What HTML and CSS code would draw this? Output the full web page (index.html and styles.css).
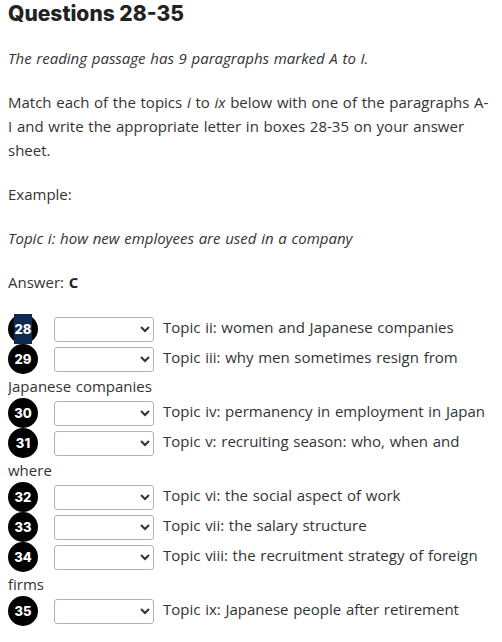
FILE: index.html
```html
<!DOCTYPE html>
<html lang="en">
<head>
<meta charset="utf-8">
<title>Questions 28-35</title>
<link rel="stylesheet" href="styles.css">
</head>
<body>
<h2 class="title">Questions 28-35</h2>
<p class="para"><em>The reading passage has 9 paragraphs marked A to I.</em></p>
<p class="para">Match each of the topics <em>i</em> to <em>ix</em> below with one of the paragraphs A-I and write the appropriate letter in boxes 28-35 on your answer sheet.</p>
<p class="para">Example:</p>
<p class="para"><em>Topic i: how new employees are used in a company</em></p>
<p class="para">Answer: <strong>C</strong></p>
<div class="questions">
<div class="q"><span class="badge"><span class="picked">28</span></span><select class="answer"><option></option><option>A</option><option>B</option><option>C</option><option>D</option><option>E</option><option>F</option><option>G</option><option>H</option><option>I</option></select><span class="topic">Topic ii: women and Japanese companies</span></div>
<div class="q"><span class="badge">29</span><select class="answer"><option></option><option>A</option><option>B</option><option>C</option><option>D</option><option>E</option><option>F</option><option>G</option><option>H</option><option>I</option></select><span class="topic">Topic iii: why men sometimes resign from Japanese companies</span></div>
<div class="q"><span class="badge">30</span><select class="answer"><option></option><option>A</option><option>B</option><option>C</option><option>D</option><option>E</option><option>F</option><option>G</option><option>H</option><option>I</option></select><span class="topic">Topic iv: permanency in employment in Japan</span></div>
<div class="q"><span class="badge">31</span><select class="answer"><option></option><option>A</option><option>B</option><option>C</option><option>D</option><option>E</option><option>F</option><option>G</option><option>H</option><option>I</option></select><span class="topic">Topic v: recruiting season: who, when and where</span></div>
<div class="q"><span class="badge">32</span><select class="answer"><option></option><option>A</option><option>B</option><option>C</option><option>D</option><option>E</option><option>F</option><option>G</option><option>H</option><option>I</option></select><span class="topic">Topic vi: the social aspect of work</span></div>
<div class="q"><span class="badge">33</span><select class="answer"><option></option><option>A</option><option>B</option><option>C</option><option>D</option><option>E</option><option>F</option><option>G</option><option>H</option><option>I</option></select><span class="topic">Topic vii: the salary structure</span></div>
<div class="q"><span class="badge">34</span><select class="answer"><option></option><option>A</option><option>B</option><option>C</option><option>D</option><option>E</option><option>F</option><option>G</option><option>H</option><option>I</option></select><span class="topic">Topic viii: the recruitment strategy of foreign firms</span></div>
<div class="q"><span class="badge">35</span><select class="answer"><option></option><option>A</option><option>B</option><option>C</option><option>D</option><option>E</option><option>F</option><option>G</option><option>H</option><option>I</option></select><span class="topic">Topic ix: Japanese people after retirement</span></div>
</div>
</body>
</html>
```

FILE: styles.css
```css
html, body {
  background: #ffffff;
}
body {
  margin: 0 11px 0 8px;
  font-family: "Open Sans", "Noto Sans", sans-serif;
  font-size: 15px;
  word-spacing: 0.8px;
  line-height: 24px;
  color: #333333;
}
.title {
  margin: 0 0 18px;
  font-family: Inter, "Open Sans", sans-serif;
  font-weight: 800;
  font-size: 21px;
  word-spacing: 0;
  line-height: 28px;
  color: #222222;
}
.para {
  margin: 0 0 20px;
}
.para strong {
  font-weight: 700;
  color: #222222;
}
.questions {
  margin: 0;
}
.q {
  line-height: 24px;
}
.badge {
  display: inline-flex;
  align-items: center;
  justify-content: center;
  width: 30px;
  height: 30px;
  border-radius: 50%;
  background: #000000;
  color: #ffffff;
  font-family: Inter, "Open Sans", sans-serif;
  font-weight: 800;
  font-size: 13px;
  word-spacing: 0;
  line-height: 30px;
  vertical-align: middle;
  margin-right: 16px;
}
.picked {
  display: inline-block;
  height: 30px;
  line-height: 30px;
  padding: 0 1px;
  background: #0c2a52;
}
.answer {
  width: 100px;
  height: 25px;
  margin: 0 9px 0 0;
  border: 1px solid #b3b3b3;
  border-radius: 3px;
  background-color: #ffffff;
  vertical-align: middle;
  font-family: "Open Sans", sans-serif;
  font-size: 13px;
  color: #333333;
}
.topic {
  vertical-align: baseline;
}
```
